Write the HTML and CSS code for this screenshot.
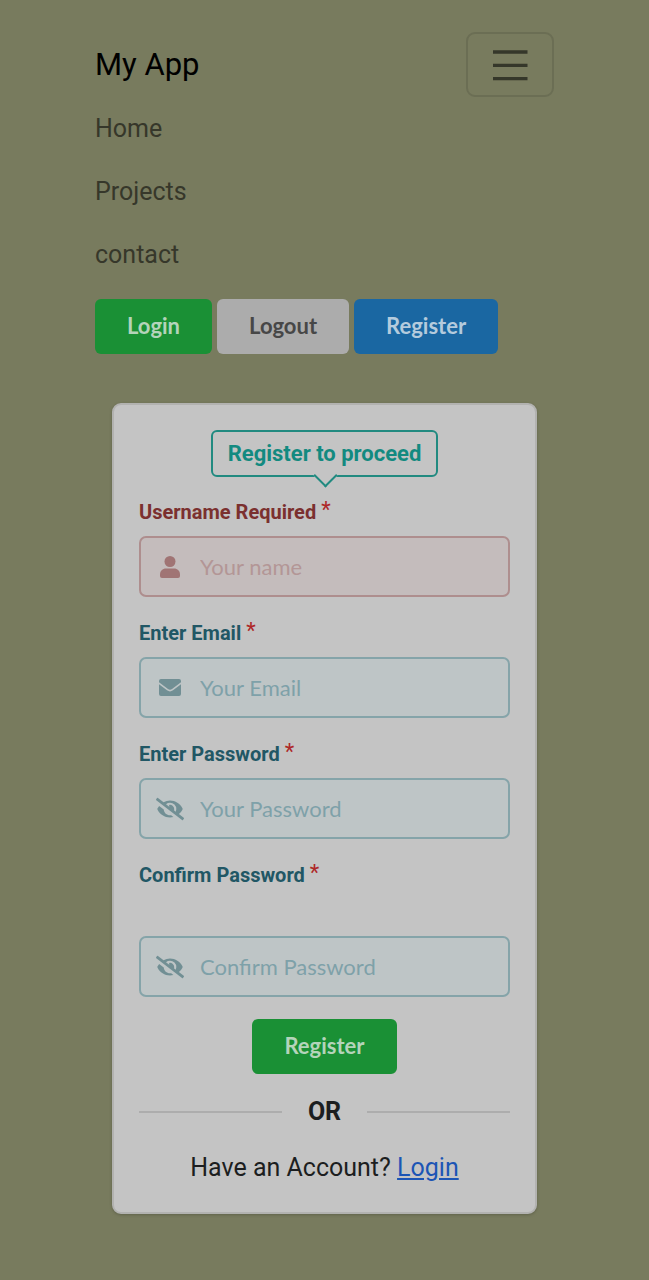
FILE: index.html
```html
<!DOCTYPE html>
<html lang="en">
<head>
<meta charset="utf-8">
<meta name="viewport" content="width=device-width, initial-scale=1">
<title>My App</title>
<link rel="stylesheet" href="styles.css">
</head>
<body class="page">
<header class="navbar">
  <div class="navbar-top">
    <a class="brand" href="#">My App</a>
    <button class="toggler" type="button" aria-label="Toggle navigation">
      <svg class="toggler-icon" viewBox="0 0 30 30" aria-hidden="true"><path d="M4.800 7.200h20.700M4.800 15.200h20.700M4.800 23.200h20.700"/></svg>
    </button>
  </div>
  <nav class="nav-links">
    <a class="nav-link" href="#">Home</a>
    <a class="nav-link" href="#">Projects</a>
    <a class="nav-link" href="#">contact</a>
  </nav>
  <div class="actions">
    <button class="button green" type="button">Login</button>
    <button class="button grey" type="button">Logout</button>
    <button class="button blue" type="button">Register</button>
  </div>
</header>
<main class="card">
  <form class="form">
    <h1 class="prompt">Register to proceed</h1>
    <div class="field error">
      <label class="label" for="username">Username Required<span class="star">*</span></label>
      <div class="control">
        <svg class="icon" viewBox="0 0 28 28" aria-hidden="true"><circle cx="14" cy="8.500" r="5.500"/><path d="M10 15.500h8c3.500 0 6 2.500 6 6V23a2 2 0 0 1-2 2H6a2 2 0 0 1-2-2v-1.500c0-3.500 2.500-6 6-6z"/></svg>
        <input class="input" id="username" type="text" placeholder="Your name">
      </div>
    </div>
    <div class="field">
      <label class="label" for="email">Enter Email<span class="star">*</span></label>
      <div class="control">
        <svg class="icon" viewBox="0 0 28 28" aria-hidden="true"><path d="M5 5h18a2 2 0 0 1 2 2v1.200l-9 6.700c-1.300 1-2.700 1-4 0L3 8.200V7a2 2 0 0 1 2-2z"/><path d="M3 10.300l8 6c2 1.500 4 1.500 6 0l8-6V20a2 2 0 0 1-2 2H5a2 2 0 0 1-2-2z"/></svg>
        <input class="input" id="email" type="email" placeholder="Your Email">
      </div>
    </div>
    <div class="field">
      <label class="label" for="password">Enter Password<span class="star">*</span></label>
      <div class="control">
        <svg class="icon" viewBox="0 0 640 512" aria-hidden="true"><path d="M320 400c-75.870 0-137.250-58.710-142.900-133.110L72.200 185.820c-13.790 17.300-26.480 35.590-36.720 55.590a32.350 32.350 0 0 0 0 29.190C89.710 376.410 197.070 448 320 448c26.910 0 52.870-4 77.890-10.460L346 397.390a144.130 144.130 0 0 1-26 2.610zm313.820 58.100l-110.550-85.440a331.250 331.250 0 0 0 81.250-102.070 32.350 32.350 0 0 0 0-29.190C550.290 135.590 442.930 64 320 64a308.150 308.150 0 0 0-147.320 37.700L45.460 3.370A16 16 0 0 0 23 6.180L3.370 31.450A16 16 0 0 0 6.180 53.900l588.360 454.730a16 16 0 0 0 22.460-2.810l19.640-25.270a16 16 0 0 0-2.820-22.450zm-183.720-142l-39.300-30.380A94.750 94.750 0 0 0 416 256a94.760 94.760 0 0 0-121.310-92.210A47.650 47.650 0 0 1 304 192a46.640 46.640 0 0 1-1.540 10l-73.610-56.890A142.310 142.310 0 0 1 320 112a143.920 143.920 0 0 1 144 144c0 21.630-5.290 41.790-13.900 60.110z"/></svg>
        <input class="input" id="password" type="password" placeholder="Your Password">
      </div>
    </div>
    <div class="field confirm">
      <label class="label" for="confirm">Confirm Password<span class="star">*</span></label>
      <div class="control">
        <svg class="icon" viewBox="0 0 640 512" aria-hidden="true"><path d="M320 400c-75.870 0-137.250-58.710-142.900-133.110L72.200 185.820c-13.790 17.300-26.480 35.590-36.720 55.590a32.350 32.350 0 0 0 0 29.190C89.710 376.410 197.070 448 320 448c26.910 0 52.870-4 77.890-10.460L346 397.390a144.130 144.130 0 0 1-26 2.610zm313.820 58.100l-110.550-85.440a331.250 331.250 0 0 0 81.250-102.070 32.350 32.350 0 0 0 0-29.190C550.290 135.590 442.930 64 320 64a308.150 308.150 0 0 0-147.320 37.700L45.460 3.370A16 16 0 0 0 23 6.180L3.370 31.450A16 16 0 0 0 6.180 53.900l588.360 454.730a16 16 0 0 0 22.460-2.810l19.640-25.270a16 16 0 0 0-2.820-22.450zm-183.720-142l-39.300-30.380A94.750 94.750 0 0 0 416 256a94.760 94.760 0 0 0-121.310-92.210A47.650 47.650 0 0 1 304 192a46.640 46.640 0 0 1-1.540 10l-73.610-56.890A142.310 142.310 0 0 1 320 112a143.920 143.920 0 0 1 144 144c0 21.630-5.290 41.790-13.900 60.110z"/></svg>
        <input class="input" id="confirm" type="password" placeholder="Confirm Password">
      </div>
    </div>
    <button class="button green submit" type="submit">Register</button>
  </form>
  <div class="divider">OR</div>
  <p class="account">Have an Account? <a class="login-link" href="#">Login</a></p>
</main>
</body>
</html>
```
FILE: styles.css
```css
* {
  box-sizing: border-box;
}

.page {
  margin: 0;
  padding: 32px 95px 64px;
  background: #787b5e;
  color: #1c1e20;
  font-family: Roboto, sans-serif;
  font-size: 25px;
  line-height: 38px;
}

.navbar-top {
  display: flex;
  justify-content: space-between;
  align-items: center;
}

.brand {
  color: #000;
  font-size: 31px;
  text-decoration: none;
}

.toggler {
  display: flex;
  align-items: center;
  justify-content: center;
  width: 88px;
  height: 65px;
  padding: 0;
  background: transparent;
  border: 2px solid #6b6e54;
  border-radius: 9px;
}

.toggler-icon {
  width: 50px;
  height: 50px;
  fill: none;
  stroke: #35372a;
  stroke-width: 2;
  stroke-linecap: butt;
}

.nav-links {
  display: flex;
  flex-direction: column;
  align-items: flex-start;
}

.nav-link {
  padding: 13px 0 12px;
  color: #36372a;
  text-decoration: none;
}

.actions {
  display: flex;
  flex-wrap: wrap;
  gap: 5px;
  margin-top: 13px;
}

.button {
  padding: 16px 32px 17px;
  border: 0;
  border-radius: 6px;
  font: bold 22px/22px Lato, sans-serif;
}

.green {
  background: #1a9035;
  color: #b4d4ba;
}

.grey {
  background: #acacac;
  color: #474747;
}

.blue {
  background: #1a67a2;
  color: #b4cbdd;
}

.card {
  margin: 49px 17px 0;
  padding: 25px;
  background: #c4c4c4;
  border: 2px solid #b2b2b0;
  border-radius: 9px;
  box-shadow: 0 1px 3px #60634b;
}

.form {
  display: flex;
  flex-direction: column;
}

.prompt {
  position: relative;
  align-self: center;
  margin: 0 0 23px;
  padding: 11px 15px 10px;
  border: 2px solid #218a80;
  border-radius: 6px;
  color: #138a80;
  font-size: 22px;
  line-height: 22px;
}

.prompt::after {
  content: "";
  position: absolute;
  left: 50%;
  bottom: -9px;
  width: 15px;
  height: 15px;
  margin-left: -8px;
  background: #c4c4c4;
  border: solid #218a80;
  border-width: 0 2px 2px 0;
  transform: rotate(45deg);
}

.field {
  display: flex;
  flex-direction: column;
  gap: 11px;
  margin-bottom: 24px;
  color: #215765;
}

.error {
  color: #7b302f;
}

.label {
  display: flex;
  gap: 5px;
  font-size: 20px;
  font-weight: bold;
  line-height: 25px;
}

.star {
  color: #ae2828;
  font-size: 22px;
  font-weight: normal;
  line-height: 20px;
}

.control {
  display: flex;
  align-items: center;
  gap: 16px;
  height: 61px;
  padding: 0 15px;
  background: #bec5c6;
  border: 2px solid #85a4a9;
  border-radius: 7px;
}

.error .control {
  background: #c4bcbc;
  border-color: #ae8e8e;
}

.icon {
  flex: none;
  width: 28px;
  height: 28px;
  fill: #718f94;
}

.error .icon {
  fill: #a07474;
}

.input {
  flex: 1;
  min-width: 0;
  padding: 0;
  background: transparent;
  border: 0;
  color: #215765;
  font: 22px/28px Lato, sans-serif;
}

.input::placeholder {
  color: #7ea1a9;
  opacity: 1;
}

.error .input::placeholder {
  color: #b39696;
}

.confirm {
  gap: 48px;
  margin-bottom: 22px;
}

.submit {
  align-self: center;
}

.divider {
  display: flex;
  align-items: center;
  gap: 26px;
  margin-top: 19px;
  font-weight: bold;
}

.divider::before,
.divider::after {
  content: "";
  flex: 1;
  height: 2px;
  background: #adadad;
}

.account {
  margin: 18px 0 0;
  text-align: center;
}

.login-link {
  color: #1c55b5;
}
```
